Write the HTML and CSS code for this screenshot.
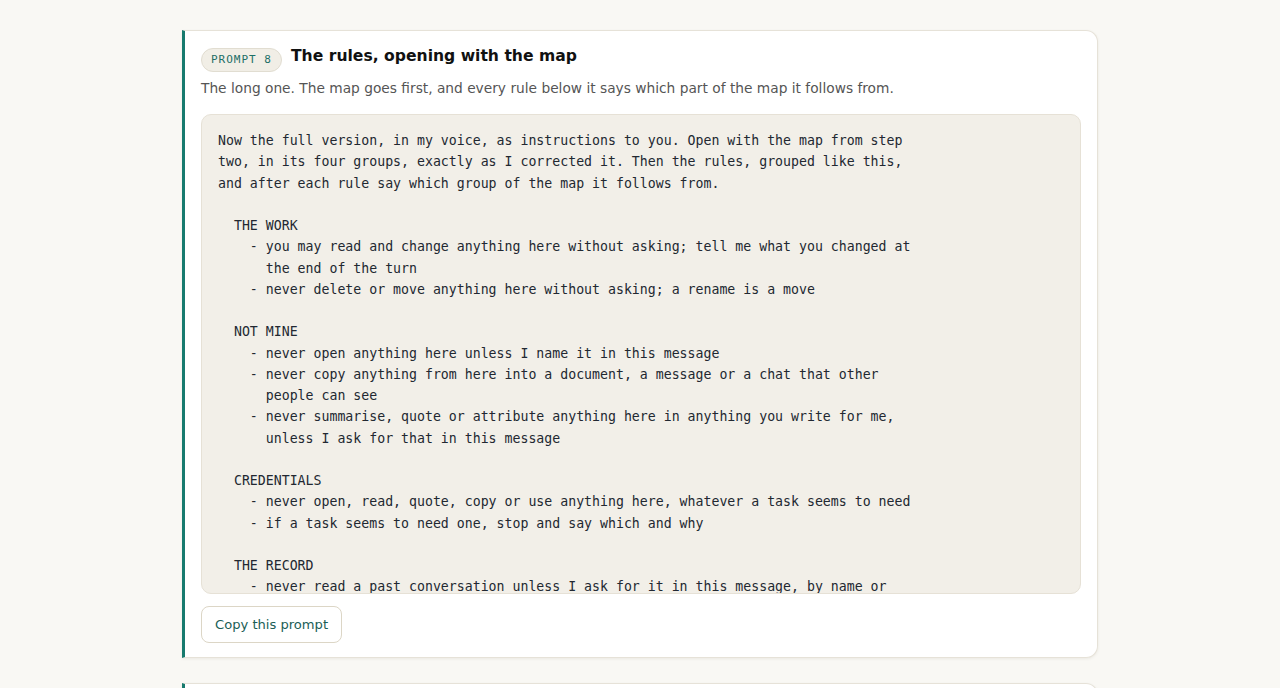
FILE: index.html
```html
<!DOCTYPE html>
<html lang="en">
<head>
<meta charset="utf-8">
<title>Prompt 8</title>
<link rel="stylesheet" href="styles.css">
</head>
<body>
<main class="page">
  <section class="card">
    <header class="card-head">
      <span class="badge">PROMPT 8</span>
      <h2 class="title">The rules, opening with the map</h2>
    </header>
    <p class="desc">The long one. The map goes first, and every rule below it says which part of the map it follows from.</p>
    <pre class="prompt">Now the full version, in my voice, as instructions to you. Open with the map from step
two, in its four groups, exactly as I corrected it. Then the rules, grouped like this,
and after each rule say which group of the map it follows from.

  THE WORK
    - you may read and change anything here without asking; tell me what you changed at
      the end of the turn
    - never delete or move anything here without asking; a rename is a move

  NOT MINE
    - never open anything here unless I name it in this message
    - never copy anything from here into a document, a message or a chat that other
      people can see
    - never summarise, quote or attribute anything here in anything you write for me,
      unless I ask for that in this message

  CREDENTIALS
    - never open, read, quote, copy or use anything here, whatever a task seems to need
    - if a task seems to need one, stop and say which and why

  THE RECORD
    - never read a past conversation unless I ask for it in this message, by name or
      by date
    - never carry anything from a past conversation into this one unless I ask</pre>
    <button class="copy" type="button">Copy this prompt</button>
  </section>
  <section class="card">
    <header class="card-head">
      <span class="badge">PROMPT 9</span>
      <h2 class="title">Next</h2>
    </header>
  </section>
</main>
</body>
</html>
```
FILE: styles.css
```css
* { box-sizing: border-box; }
html, body { margin: 0; padding: 0; }
body {
  background: #f9f8f4;
  font-family: "DejaVu Sans", "Liberation Sans", sans-serif;
  color: #1a1a1a;
}
.page {
  padding: 30px 0 40px;
  display: flex;
  flex-direction: column;
  align-items: center;
  gap: 25px;
}
.card {
  width: 916px;
  background: #ffffff;
  border: 1px solid #e6e2d8;
  border-left: 3px solid #177a6e;
  border-radius: 0 12px 12px 0;
  box-shadow: 0 1px 3px rgba(60, 50, 30, 0.08);
  padding: 17px 16px 14px 16px;
}
.card-head {
  display: flex;
  align-items: center;
  gap: 9px;
}
.badge {
  font-family: "DejaVu Sans Mono", "Liberation Mono", monospace;
  font-size: 11px;
  letter-spacing: 1px;
  color: #1d6f66;
  background: #f1eee6;
  border: 1px solid #e1ddd1;
  border-radius: 999px;
  padding: 4px 9px 4px 9px;
  line-height: 14px;
}
.title {
  margin: 0;
  font-size: 15.6px;
  font-weight: bold;
  color: #111;
  line-height: 22px;
  position: relative;
  top: -4px;
}
.desc {
  margin: 5px 0 15px;
  font-size: 13.75px;
  line-height: 22px;
  color: #555;
}
.prompt {
  margin: 0;
  background: #f2efe8;
  border: 1px solid #e6e1d6;
  border-radius: 10px;
  padding: 15px 16px;
  font-family: "DejaVu Sans Mono", "Liberation Mono", monospace;
  font-size: 13.22px;
  line-height: 21.25px;
  color: #222831;
  white-space: pre;
  height: 480px;
  overflow: hidden;
}
.copy {
  margin-top: 12px;
  font-family: "DejaVu Sans", "Liberation Sans", sans-serif;
  font-size: 13.1px;
  color: #1b5e56;
  background: #fff;
  border: 1px solid #dcd6c6;
  border-radius: 8px;
  padding: 0 13px;
  height: 37px;
  cursor: pointer;
}
```
